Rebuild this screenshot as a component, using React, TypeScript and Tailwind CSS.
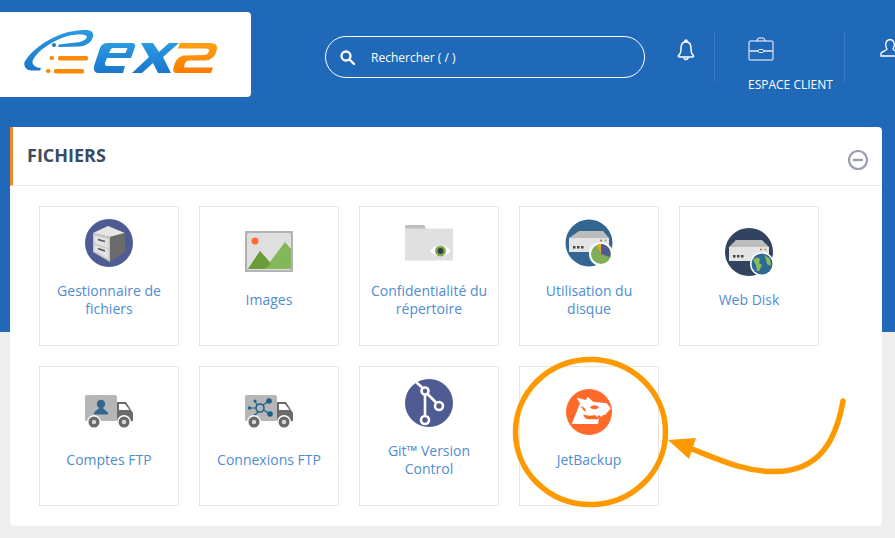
import React from "react";

const font = { fontFamily: '"Open Sans", sans-serif' };

function Logo() {
  return (
    <svg width="196" height="46" viewBox="24 30 196 46" fill="none">
      <defs>
        <linearGradient id="lb" x1="0" y1="0" x2="0" y2="1">
          <stop offset="0" stopColor="#2a9be0" />
          <stop offset="1" stopColor="#1b76cc" />
        </linearGradient>
        <linearGradient id="lo" x1="0" y1="0" x2="0" y2="1">
          <stop offset="0" stopColor="#ffa212" />
          <stop offset="1" stopColor="#fb7a00" />
        </linearGradient>
      </defs>
      <path d="M24.500 62 C30 52 45 40 62 34 C70 31 80 30 86 30 C92 30 94 33 93 37 C91 43 86 46 79 46.500 L58 47 L59 44.500 L76 42.500 C84 41.500 88 38 86.500 36 C85 34 76 34 68 36 C54 40 38 50 33 60 C31 64 35 68 41 68 L40 70.500 L32 70.500 C26 70.500 23.500 66 24.500 62Z" fill="url(#lb)" />
      <circle cx="54" cy="45" r="2" fill="#1b76cc" />
      <rect x="49.500" y="56" width="4.500" height="4" rx="1.800" fill="#fb8a06" />
      <rect x="58" y="56" width="30" height="4.500" rx="1.500" fill="#fb8a06" />
      <rect x="46" y="69" width="4.500" height="4" rx="1.800" fill="#fb8a06" />
      <rect x="54" y="69" width="30" height="4.500" rx="1.500" fill="#fb8a06" />
      <path d="M94 66 L100 48 Q102 43 108 43 L132 43 Q136 43 135 47 L131 58 L107 58 L105 63 Q104.500 66 107 66 L125 66 L123 73 L98 73 Q93 73 94 66Z M109 53 L125.500 53 L127.500 48 L113 48 Q111 48 110.500 50Z" fill="url(#lb)" fillRule="evenodd" />
      <path d="M132 73 L149 57 L141 43 L153 43 L159 52 L169 43 L179 43 L163 57 L171 73 L158 73 L153 63 L142 73Z" fill="url(#lb)" />
      <path d="M180 43 L210 43 Q218 43 217 49 Q215 60 205 60.500 L190 60.500 Q186 60.500 185 63 L184 67.500 L213 67.500 L211 73 L177 73 Q172 73 173.500 68 Q175 58 183 55.500 L204 55 Q208 55 209 51 Q209.500 48.500 206 48.500 L178 48.500Z" fill="url(#lo)" />
    </svg>
  );
}

const Bell = () => (
  <svg width="18" height="22" viewBox="0 0 18 22" fill="none" stroke="white" strokeWidth="1.500" strokeLinejoin="round">
    <path d="M1.500 16.500 C4 15 4 12 4 9 C4 5.500 6 3 9 2.500 C12 3 14 5.500 14 9 C14 12 14 15 16.500 16.500 Q17 18 15.500 18 L2.500 18 Q1 18 1.500 16.500Z" />
    <circle cx="9" cy="2" r="1" />
    <path d="M7 18.500 A2 2 0 0 0 11 18.500" />
  </svg>
);

const Briefcase = () => (
  <svg width="26" height="24" viewBox="0 0 26 24" fill="none" stroke="white">
    <rect x="1" y="4" width="24" height="19" rx="1" strokeWidth="1" />
    <path d="M9 4 Q9 1 11 1 L15 1 Q17 1 17 4" strokeWidth="1" />
    <path d="M1 14 L10 14 M16 14 L25 14" stroke="#b5cde8" strokeWidth="2" />
    <rect x="10.500" y="12.500" width="5" height="3" rx="1" strokeWidth="1" />
  </svg>
);

const Users = () => (
  <svg width="26" height="20" viewBox="0 0 26 20" fill="none" stroke="white" strokeWidth="1.300">
    <path d="M1 18 L1 15 C3 13 6 13 7 11 C5 8 5 2 10 1.500 C15 2 15 8 13 11 C14 13 17 13 19 15 L19 18Z" />
    <path d="M15 2 C20 1 22 6 20 11 C21 13 24 13 26 15" />
  </svg>
);

const Cabinet = () => (
  <svg width="48" height="48" viewBox="0 0 48 48">
    <circle cx="24" cy="24" r="24" fill="#4f5b93" />
    <path d="M8 14 L23 7 L40 14 L25 18Z" fill="#e6e6e6" />
    <path d="M8 14 L25 18 L25 43 L8 33Z" fill="#c9c9c9" />
    <path d="M25 18 L40 14 L40 33 L25 43Z" fill="#6b6b6b" />
    <path d="M9.500 16.500 L23.500 20 L23.500 29 L9.500 24.500Z M9.500 26 L23.500 30.500 L23.500 40 L9.500 32Z" fill="#e2e2e2" />
    <path d="M13 20.500 L20 22.500 M13 29.500 L20 32" stroke="#555" strokeWidth="1.500" />
  </svg>
);

const ImageIcon = () => (
  <svg width="48" height="42" viewBox="0 0 48 42">
    <rect width="48" height="41" fill="#b3b3b3" />
    <rect x="2" y="2" width="44" height="37" rx="2" fill="#dfdfdf" />
    <circle cx="10" cy="10" r="3.500" fill="#ff6c2c" />
    <path d="M3 38 L15 20 L25 31 L40 11 L46 18 L46 36 Q46 38 44 38Z" fill="#84b65c" />
    <path d="M3 38 L15 20 L26 33 L19 38Z" fill="#6c9c3a" />
  </svg>
);

const FolderEye = () => (
  <svg width="48" height="36" viewBox="0 0 48 36">
    <path d="M0 2 Q0 0 2 0 L18 0 Q20 0 20.500 3 L20.500 4 L0 4Z" fill="#bdbdbd" />
    <path d="M0 3.500 L48 3.500 L48 35 Q48 35.500 47 35.500 L1 35.500 Q0 35.500 0 35Z" fill="#e0e0e0" />
    <path d="M25 26 Q35 14 46 26 Q35 37 25 26Z" fill="#fff" />
    <circle cx="35.500" cy="26" r="5.500" fill="#7fae56" />
    <circle cx="35.500" cy="26" r="3" fill="#3d3d3d" />
  </svg>
);

const DiskUsage = () => (
  <svg width="48" height="48" viewBox="0 0 48 48">
    <circle cx="24" cy="24" r="23.500" fill="#336791" />
    <path d="M4 19 L14 12 L38 12 L44 19Z" fill="#bcbcbc" />
    <rect x="4" y="19" width="40" height="14" fill="#e4e4e4" />
    <circle cx="36" cy="21.500" r="1" fill="#e0502f" />
    <circle cx="40.500" cy="21.500" r="1" fill="#7fae56" />
    <rect x="8" y="27" width="2.500" height="2.500" fill="#444" />
    <rect x="12" y="27" width="2.500" height="2.500" fill="#444" />
    <rect x="16" y="27" width="2.500" height="2.500" fill="#444" />
    <circle cx="36" cy="35" r="12" fill="#fff" />
    <circle cx="36" cy="35" r="10" fill="#7fae56" />
    <path d="M36 35 L36 25 A10 10 0 0 1 45 38Z" fill="#4f5b93" />
    <path d="M36 35 L32 26 A10 10 0 0 1 36 25Z" fill="#eda32c" />
  </svg>
);

const WebDisk = () => (
  <svg width="48" height="48" viewBox="0 0 48 48">
    <circle cx="24" cy="24" r="24" fill="#33425f" />
    <path d="M4 19 L11 12 L37 12 L44 19Z" fill="#bcbcbc" />
    <rect x="4" y="19" width="40" height="14" fill="#e4e4e4" />
    <circle cx="36" cy="21.500" r="1" fill="#e0502f" />
    <circle cx="40.500" cy="21.500" r="1" fill="#7fae56" />
    <rect x="8" y="27" width="2.500" height="2.500" fill="#444" />
    <rect x="12" y="27" width="2.500" height="2.500" fill="#444" />
    <rect x="16" y="27" width="2.500" height="2.500" fill="#444" />
    <circle cx="37" cy="36" r="12" fill="#fff" />
    <circle cx="37" cy="36" r="10.500" fill="#2f6a94" />
    <path d="M28 32 Q32 28 35 31 L34 35 L37 37 L34 43 L32 43 L31 37Z M39 27 L45 31 L46 38 L42 36 L41 31Z" fill="#8abb5b" />
  </svg>
);

const TruckBase = ({ children }: { children?: React.ReactNode }) => (
  <svg width="48" height="34" viewBox="0 0 48 34">
    <rect x="0" y="0" width="32" height="26" rx="1.500" fill="#b6b6b6" />
    <path d="M32 7 L41 7 L48 18 L48 26 L32 26Z" fill="#6a6a6a" />
    <path d="M34 9 L40 9 L44.500 15 L34 15Z" fill="#fff" />
    {children}
    <circle cx="9" cy="27" r="7" fill="#fff" />
    <circle cx="9" cy="27" r="5.500" fill="#6a6a6a" />
    <circle cx="9" cy="27" r="2.200" fill="#d8d8d8" />
    <circle cx="39" cy="27" r="7" fill="#fff" />
    <circle cx="39" cy="27" r="5.500" fill="#6a6a6a" />
    <circle cx="39" cy="27" r="2.200" fill="#d8d8d8" />
  </svg>
);

const TruckUser = () => (
  <TruckBase>
    <circle cx="16" cy="9" r="4.200" fill="#336791" />
    <path d="M9 19.500 L9 18 C10 15.500 13 15 14 13 L18 13 C19 15 22 15.500 23 18 L23 19.500Z" fill="#336791" />
  </TruckBase>
);

const TruckNet = () => (
  <TruckBase>
    <g stroke="#1f6088" strokeWidth="1.200" fill="none">
      <circle cx="15" cy="13" r="4" strokeWidth="1.600" />
      <path d="M5 13 L11 13 M10 6.500 L12.500 10 M18 10 L24 6 M18.500 15 L25 19 M13 17 L10 20" />
    </g>
    <g fill="#1f6088">
      <circle cx="4.500" cy="13" r="1.700" />
      <circle cx="10" cy="6" r="1.500" />
      <circle cx="24" cy="6" r="2.800" />
      <circle cx="25" cy="19" r="2.800" />
      <circle cx="10" cy="20" r="1.300" />
    </g>
  </TruckBase>
);

const Git = () => (
  <svg width="48" height="48" viewBox="0 0 48 48">
    <circle cx="24" cy="24" r="24" fill="#4f5b93" />
    <g stroke="#fff" strokeWidth="2.600" fill="none">
      <path d="M11 3 L20 11 L20 36 M21.500 14 L31 23.500" />
      <circle cx="20" cy="12" r="3.500" fill="#4f5b93" />
      <circle cx="34" cy="27" r="4" fill="#4f5b93" />
      <circle cx="20" cy="41" r="4" fill="#4f5b93" />
    </g>
  </svg>
);

const JetBackup = () => (
  <svg width="46" height="46" viewBox="0 0 46 46">
    <circle cx="23" cy="23" r="23" fill="#ff6a2b" />
    <path d="M5.700 35 L14 14.500 L10.700 8.700 L20 11 L21.700 7.700 L27 12.700 L40.700 14.300 L44.700 19.300 L39 26 L29 26 C25 27 20 27 17.300 25 C18 29 20 30.300 24 30.300 L31 30.300 L33 29.300 L32 35Z" fill="#fff" />
    <path d="M24 18.300 C26 15.500 31 15.500 33 18.300 C31 20.800 26 20.800 24 18.300Z" fill="#ff6a2b" />
    <path d="M29 26 L31 28 L33 26 L35 28 L37 26Z" fill="#fff" />
    <path d="M15 17 C18 18 20 20 20 23 C18 22 16 20 15 17Z" fill="#ff6a2b" />
  </svg>
);

const items: { label: string; icon: React.ReactNode; two?: boolean }[] = [
  { label: "Gestionnaire de fichiers", icon: <Cabinet />, two: true },
  { label: "Images", icon: <ImageIcon /> },
  { label: "Confidentialité du répertoire", icon: <FolderEye />, two: true },
  { label: "Utilisation du disque", icon: <DiskUsage />, two: true },
  { label: "Web Disk", icon: <WebDisk /> },
  { label: "Comptes FTP", icon: <TruckUser /> },
  { label: "Connexions FTP", icon: <TruckNet /> },
  { label: "Git™ Version Control", icon: <Git />, two: true },
  { label: "JetBackup", icon: <JetBackup /> },
];

function Card({ label, icon, two }: { label: string; icon: React.ReactNode; two?: boolean }) {
  return (
    <div className="flex h-[140px] w-[140px] flex-col items-center border border-[#e6e6e6] px-2 pt-[12px]">
      <div className={two ? "flex h-[48px] w-full items-center justify-center" : "mt-[9px] flex h-[48px] w-full items-center justify-center"}>
        {icon}
      </div>
      <div className="mt-[15px] text-center text-[14px] leading-[18px] text-[#4f8dd0]">{label}</div>
    </div>
  );
}

export default function App() {
  return (
    <div className="relative h-[538px] w-[895px] overflow-hidden bg-[#eeeeee]" style={font}>
      <header className="flex h-[127px] items-start bg-[#2069b9]">
        <div className="mt-3 h-[85px] w-[251px] shrink-0 rounded-r bg-white pl-[24px] pt-[18px]">
          <Logo />
        </div>
        <div className="ml-[74px] mt-9 flex h-[42px] w-[320px] shrink-0 items-center rounded-full border border-white pl-[14px]">
          <svg width="15" height="15" viewBox="0 0 15 15" fill="none" stroke="white" strokeWidth="2.300">
            <circle cx="6" cy="6" r="4.500" />
            <path d="M9.500 9.500 L14 14" strokeLinecap="round" />
          </svg>
          <span className="ml-4 translate-y-px text-[12px] text-white">Rechercher ( / )</span>
        </div>
        <div className="ml-[32px] mt-[39px] shrink-0">
          <Bell />
        </div>
        <div className="ml-[19px] mt-8 h-[50px] w-px shrink-0 bg-[#3a7cc4]" />
        <div className="ml-[33px] mt-[37px] flex w-[96px] shrink-0 flex-col items-start">
          <Briefcase />
          <span className="mt-[15px] whitespace-nowrap text-[12px] leading-[17px] text-white">ESPACE CLIENT</span>
        </div>
        <div className="mt-8 h-[50px] w-px shrink-0 bg-[#3a7cc4]" />
        <div className="ml-[35px] mt-[38px] shrink-0">
          <Users />
        </div>
      </header>
      <main className="flex h-[411px] bg-[linear-gradient(#2069b9_205px,#eeeeee_205px)]">
        <section className="ml-[10px] h-[399px] w-[872px] rounded-sm bg-white">
          <div className="flex h-[59px] items-center justify-between border-b border-l-[3px] border-[#ececec] border-l-[#f08a24] pl-[14px] pr-[14px]">
            <h2 className="mb-[2px] text-[18px] font-bold text-[#3d4a5f]">FICHIERS</h2>
            <svg className="mt-[7px]" width="20" height="20" viewBox="0 0 20 20" fill="none" stroke="#9b9fad">
              <circle cx="10" cy="10" r="9" strokeWidth="2.200" />
              <path d="M5 10 L15 10" strokeWidth="2.400" />
            </svg>
          </div>
          <div className="grid grid-cols-[repeat(5,140px)] gap-5 pl-[29px] pt-5">
            {items.map((it) => (
              <Card key={it.label} {...it} />
            ))}
          </div>
        </section>
      </main>
      <svg className="absolute left-0 top-0" width="895" height="538" fill="none" stroke="#ff9900">
        <ellipse cx="590.500" cy="432" rx="75" ry="72.500" strokeWidth="5.500" />
        <path d="M843 401 C836 440 820 471 775 471.500 C745 472 720 460 692 449" strokeWidth="5.500" strokeLinecap="round" />
        <path d="M668 440 L696 438 L689 459Z" fill="#ff9900" stroke="none" />
      </svg>
    </div>
  );
}
